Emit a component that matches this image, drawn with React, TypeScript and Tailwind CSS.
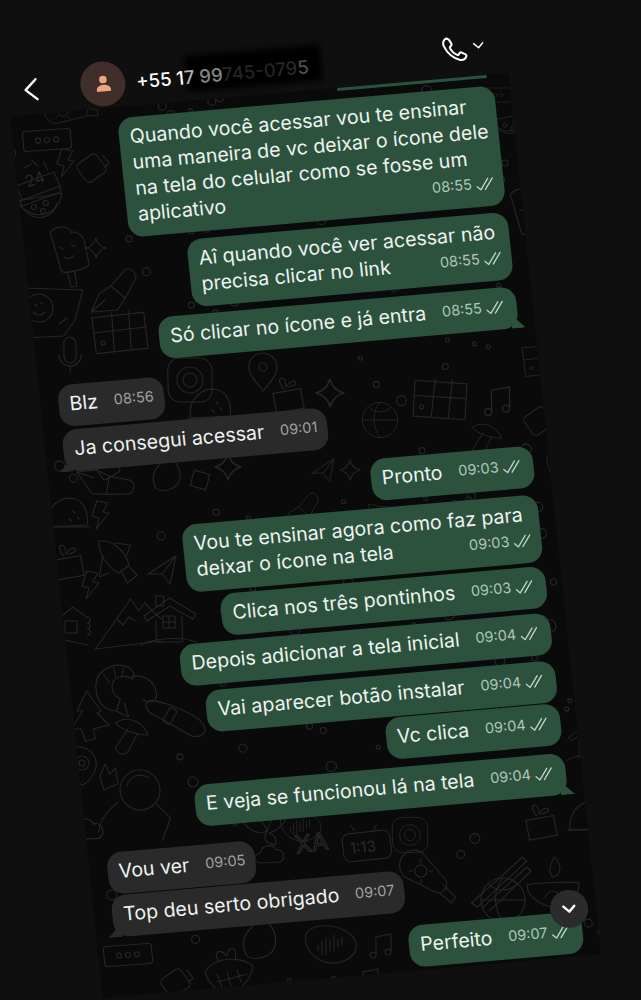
import { ChevronDown } from 'lucide-react'
import type { ReactNode } from 'react'

type Msg = {
  out: boolean
  lines: string[]
  time: string
  mt: string
  tail?: boolean
  down?: boolean
  inset?: string
}

const messages: Msg[] = [
  { out: true, lines: ['Quando você acessar vou te ensinar', 'uma maneira de vc deixar o ícone dele', 'na tela do celular como se fosse um', 'aplicativo'], time: '08:55', mt: 'mt-0' },
  { out: true, lines: ['Aî quando você ver acessar não', 'precisa clicar no link'], time: '08:55', mt: 'mt-[7px]', inset: 'pr-[4px]' },
  { out: true, lines: ['Só clicar no ícone e já entra'], time: '08:55', mt: 'mt-[7px]', tail: true },
  { out: false, lines: ['Blz'], time: '08:56', mt: 'mt-[17px]' },
  { out: false, lines: ['Ja consegui acessar'], time: '09:01', mt: 'mt-[3px]', tail: true },
  { out: true, lines: ['Pronto'], time: '09:03', mt: 'mt-[14px]' },
  { out: true, lines: ['Vou te ensinar agora como faz para', 'deixar o ícone na tela'], time: '09:03', mt: 'mt-[7px]', inset: 'pr-[6px]' },
  { out: true, lines: ['Clica nos três pontinhos'], time: '09:03', mt: 'mt-[4px]' },
  { out: true, lines: ['Depois adicionar a tela inicial'], time: '09:04', mt: 'mt-[5px]' },
  { out: true, lines: ['Vai aparecer botão instalar'], time: '09:04', mt: 'mt-[6px]' },
  { out: true, lines: ['Vc clica'], time: '09:04', mt: 'mt-[1px]' },
  { out: true, lines: ['E veja se funcionou lá na tela'], time: '09:04', mt: 'mt-[8px]', tail: true },
  { out: false, lines: ['Vou ver'], time: '09:05', mt: 'mt-[18px]' },
  { out: false, lines: ['Top deu serto obrigado'], time: '09:07', mt: 'mt-px', tail: true },
  { out: true, lines: ['Perfeito'], time: '09:07', mt: 'mt-[14px]', down: true },
]

// wallpaper doodles, drawn around 0,0
const shapes: Record<string, ReactNode> = {
  card: <><rect x="-24" y="-10" width="48" height="20" rx="3" /><circle cx="-9" r="2.5" /><circle r="2.5" /><circle cx="9" r="2.5" /></>,
  cake: <><path d="M-22 4l38-14 6 14-38 14zM-22 4l0 8 6 12 38-14 0-6" /><path d="M-14-14l8-4M-6-22l6 6M6-20l4 8" /><text x="-12" y="2" fontSize="16" fill="#262626" stroke="none" transform="rotate(-18)">24</text></>,
  melon: <><path d="M-22-12A23 23 0 0 0 22-20Z" /><path d="M-16-4A18 18 0 0 0 17-10" /><circle cx="-6" cy="-6" r="2.5" /><circle cx="3" cy="-2" r="2.5" /><circle cx="6" cy="-10" r="2.5" /></>,
  popsicle: <><path d="M-16-22C-6-30 4-26 5-20c4-2 10 2 12 8l3 24c0 5-24 9-28 6z" /><path d="M-2 20l2 14h6l-1-16" /><path d="M-8-6l4 2M4-8l4 2M-4 4a6 6 0 0 0 9-1" /></>,
  pen: <><path d="M-22 22l8-18 12-8 14 12-8 12z" /><path d="M-2-4L12-20c5-4 14 4 10 10L12 8" /><path d="M-22 22L-8 10" /></>,
  bolt: <path d="M-3-14L8-12 3-3 9-2-4 14-1 3-8 1z" />,
  jar: <><rect x="-14" y="-11" width="24" height="22" rx="4" transform="rotate(-35)" /><path d="M10-12l6 8-4 4" /></>,
  sparkle: <path d="M0-10Q2-2 10 0 2 2 0 10-2 2-10 0-2-2 0-10z" />,
  smile: <><path d="M-28-22l58 2-8 30-12 16-38 2z" /><circle cx="-14" cy="-2" r="14" /><path d="M-18-6l2 2M-12-8l2 2M-20 2q6 6 12 0M6 14l8-6" /></>,
  grid: <><rect x="-26" y="-18" width="52" height="36" transform="rotate(-6)" /><path d="M-8-20l2 38M9-22l2 38M-26 0l52-6" /><circle cx="-17" cy="10" r="2" /></>,
  mic: <><rect x="-6" y="-16" width="12" height="26" rx="6" /><path d="M-11 2a11 11 0 0 0 22 0M0 13v6" /></>,
  taco: <><path d="M-20 10C-22-10-6-22 8-18c10 2 14 16 12 26z" /><path d="M-22 10h44M6-6l2 2M10 0l2 2M2 2l2 2" /></>,
  rocket: <><path d="M-16-22c12-2 26 8 30 24L4 10C-8 4-16-8-16-22z" /><path d="M-12-8l-4 22 10-4M0-20l16 2-4 10M6 8l6 12 10-8-8-8" /></>,
  plane: <path d="M-14 4L14-14 8 14 0 4zM0 4l14-18" />,
  hut: <><path d="M-22 2L0-16l14 10M-22 2l0 12 36 8M-14-2v16" /><rect x="-8" y="-2" width="12" height="12" /><path d="M14-6c4 0 4 6 0 6 4 0 4 6 0 6 4 0 4 6 0 6" /></>,
  mountain: <path d="M-28 26L8-24 16-12 22-20 38-4M-28 26L38 18M-6-4l6 6 6-8 6 4" />,
  house: <><path d="M-26-4L0-22 26-6l-3 5L0-14-23 1zM-14 0v22h26V-4" /><rect x="-7" y="-4" width="12" height="12" /><path d="M-1-4V8M-7 2H5M-30 26c10-8 40-10 56-4" /><rect x="-14" y="-24" width="8" height="10" /></>,
  shrimp: <><path d="M-24 2C-26-16-6-26 8-20c6 3 8 9 4 12-8-6-20-2-20 8 0 6 4 10 8 12l-4 12C-16 24-24 14-24 2z" /><path d="M-16-12l6 8M-6-20l2 10M4-20l-2 10M-4 24l12 6-4-14" /><path d="M12-10c10-4 22 4 24 14s-6 14-14 8" /></>,
  tree: <path d="M0-26L-10-6-4-6-16 12-6 12-2 24 8 22 6 12 22 8 10-4 14-6z" />,
  mushroom: <><path d="M-14-14C-4-22 14-16 18-2 8-2-8-6-14-14z" /><path d="M-2-8L-14 10c-2 6 8 10 12 4L8-4" /></>,
  avocado: <><path d="M-16-16C-6-24 12-20 14-6c2 10-8 22-14 24-6-2-18-22-16-34z" /><circle cy="-4" r="7" /><circle cy="-4" r="3" /></>,
  astronaut: <><circle r="20" /><path d="M-13-4a14 14 0 0 1 22-8" /><path d="M-22 12c-10 8-18 16-20 30M16 14l14 14-8 22M-40-14l6-12 4 10 6-6 2 16-14 6z" /></>,
  board: <><path d="M-30-18c6-6 50 12 56 22s-4 14-12 12L-24-6c-6-2-8-8-6-12z" /><rect x="-12" y="-8" width="8" height="16" rx="2" transform="rotate(30)" /></>,
  clock: <><rect x="-24" y="-15" width="48" height="28" rx="7" /><text x="-17" y="5" fontSize="15" fill="#2b2b2b" stroke="none">1:13</text><path d="M-14-23l4 5M12-21l-3 5" /></>,
  xa: <><text x="-18" y="8" fontSize="24" fill="none" stroke="#2b2b2b">XA</text></>,
  cloud: <path d="M-12 8c-8 0-8-10 0-10 0-8 12-10 15-3 7-2 11 8 4 12z" />,
  leaf: <path d="M-24-6C-12-12-4-8 0 4 4-10 12-18 24-20 20-6 14 2 2 6 8 8 10 12 8 18-4 16-4 10 0 4-8 8-18 4-24-6z" />,
  berry: <><path d="M-22 2C-12-14 14-14 26-4 24 12 8 24-4 24-14 18-20 10-22 2z" /><path d="M-8-8C-14-16-8-24 0-14 2-26 12-24 8-10M-10 12l30-8M-4 20L-10 4M4 18L0 2M14 12L10 0" /></>,
  audio: <><path d="M-24-8C-18-24 22-18 26 0 28 16 6 24-8 18-18 14-26 4-24-8z" /><path d="M-12 2V8M-8-2V12M-4-6V12M0-4V8M4-8V8M8-4V4M12-6V2" /></>,
  note: <path d="M-7 10a3 3 0 1 0 0 .1V-8L8-11V7a3 3 0 1 0 0 .1" />,
  bottle: <><path d="M-26-18c4-8 14-12 22-6l22 26c6 8-4 18-12 12L-22 0c-6-4-6-12-4-18zM16 8l12 12-4 6-12-10" /><circle cx="-6" cy="-6" r="6" /><path d="M-6-18v4M-18-6h4M-6 2v4M2-6h4" /></>,
  sticks: <path d="M-26 26L26-20l4 4-50 46zM-14 30L30-10l4 4-42 40" />,
  diya: <><path d="M-26 2c8-2 44-4 52-2 0 14-14 24-24 24S-26 16-26 2z" /><path d="M0-6c-6-6-2-14 2-20 6 8 8 14 0 20M-8 14c4-8 12-8 14 0" /></>,
  ball: <><circle r="22" /><path d="M-22 0h44M0-22c-10 12-10 32 0 44M-14-16c8 8 20 8 28 0" /></>,
  lens: <><rect x="-22" y="-22" width="44" height="44" rx="12" /><circle r="13" /><circle r="7" /></>,
  pin: <><path d="M0 18C-8 8-14 2-14-6a14 14 0 0 1 28 0C14 2 8 8 0 18z" /><circle cy="-6" r="4" /></>,
  gift: <><rect x="-14" y="-2" width="28" height="20" transform="rotate(-10)" /><path d="M-3-4C-14-16 0-20-1-6 6-18 16-8 1-6" /></>,
  diamond: <rect x="-8" y="-8" width="16" height="16" transform="rotate(16)" />,
  capsule: <rect x="-12" y="-4" width="24" height="8" rx="4" />,
  flame: <path d="M-12 12C-20-8 0-10-2-22 8-16 16-6 12 6 8 16-8 18-12 12z" />,
}

// placement in picture coordinates, so it lines up with the rotated panel
const placed: [string, number, number, number, number][] = [
  ['card', 47, 140, 1, -4], ['cake', 38, 182, 1, 0], ['melon', 40, 213, 1, 0], ['popsicle', 68, 253, 1, -4],
  ['pen', 113, 290, 1, 0], ['bolt', 65, 163, 1, 0], ['jar', 93, 167, 1, 0], ['sparkle', 96, 248, 1, 0],
  ['smile', 53, 310, 1, 0], ['grid', 120, 333, 1, 0], ['mic', 70, 353, 1, 0], ['bottle', 70, 112, 0.8, -40],
  ['lens', 190, 380, 1, 0], ['pin', 263, 373, 1, 0], ['gift', 287, 393, 1, 0], ['sparkle', 330, 393, 1.4, 0],
  ['taco', 210, 408, 1, 0], ['diamond', 200, 480, 1, 0], ['sparkle', 228, 467, 1.3, 0], ['flame', 167, 475, 1, 0],
  ['pen', 107, 480, 1, 60], ['plane', 323, 470, 0.8, 0], ['grid', 440, 400, 1, 10], ['note', 500, 400, 1.2, 0],
  ['ball', 380, 420, 0.8, 0], ['jar', 540, 420, 1, 0], ['melon', 120, 400, 0.8, 30], ['card', 100, 455, 1, 60],
  ['taco', 67, 517, 1, 0], ['gift', 67, 560, 1, 0], ['rocket', 115, 563, 1, 0], ['plane', 162, 570, 1, 0],
  ['hut', 73, 623, 1, 0], ['mountain', 123, 623, 1, 0], ['house', 170, 620, 1, 0], ['shrimp', 120, 687, 1, 0],
  ['tree', 87, 717, 1, 0], ['mushroom', 130, 737, 1, 0], ['avocado', 82, 767, 1, 0], ['astronaut', 140, 790, 1, 0],
  ['board', 177, 720, 1, 0], ['bolt', 90, 585, 1, 0], ['bolt', 100, 515, 1, 0], ['cloud', 90, 830, 1.2, 0],
  ['clock', 367, 847, 1, -6], ['xa', 313, 843, 1, -8], ['cloud', 273, 855, 1, 0], ['leaf', 267, 827, 1, 0],
  ['card', 128, 955, 1, -4], ['berry', 227, 970, 1, 0], ['audio', 330, 943, 1, 0], ['jar', 177, 982, 1, 0],
  ['note', 383, 945, 1, 0], ['bottle', 427, 877, 1, 0], ['sticks', 497, 877, 1, 0], ['diya', 553, 883, 1, 0],
  ['ball', 503, 900, 1, 0], ['audio', 300, 825, 0.8, 0], ['flame', 260, 940, 1.2, 0], ['note', 370, 980, 1, 0],
  ['popsicle', 528, 215, 1, -4], ['melon', 510, 130, 0.8, 0], ['card', 495, 95, 0.7, 0], ['grid', 545, 360, 0.8, 0],
  ['avocado', 560, 470, 0.8, 0], ['board', 595, 520, 0.8, 0], ['cloud', 545, 625, 1, 0], ['house', 590, 740, 0.8, 0],
  ['taco', 590, 820, 1, 0], ['pin', 590, 640, 1, 0], ['gift', 540, 820, 1, 0], ['lens', 410, 835, 0.8, 0],
  ['mushroom', 485, 440, 0.9, 0], ['sparkle', 350, 470, 1, 0], ['rocket', 380, 520, 0.7, 0], ['pen', 300, 510, 0.8, 0],
]

const C = Math.cos((5 * Math.PI) / 180)
const S = Math.sin((5 * Math.PI) / 180)
const T = Math.tan(Math.PI / 180)

function toPanel(sx: number, sy: number) {
  const dx = sx - 320.5
  const dy = sy - 500
  const ly = dx * S + dy * C
  const lx = dx * C - dy * S - T * ly
  return [lx + 268.5, ly + 409]
}

const rand = (n: number) => {
  const v = Math.sin(n * 12.9898) * 43758.5453
  return v - Math.floor(v)
}

const dots = Array.from({ length: 420 }).map((_, i) => {
  const sx = 10 + rand(i + 1) * 600
  const sy = 90 + rand(i + 500) * 910
  return { sx, sy, r: 2 + (i % 4), key: i }
}).filter((d) => placed.every(([, x, y, s]) => Math.hypot(d.sx - x, d.sy - y) > 32 * s))

function Wallpaper() {
  return (
    <svg width="500" height="886" viewBox="0 0 500 886" fill="none" stroke="#262626" strokeWidth="1.1" strokeLinejoin="round" strokeLinecap="round" className="absolute inset-0">
      {dots.map((d) => {
        const [x, y] = toPanel(d.sx, d.sy)
        return <circle key={d.key} cx={x} cy={y} r={d.r} />
      })}
      {placed.map(([kind, sx, sy, s, rot], i) => {
        const [x, y] = toPanel(sx, sy)
        return <g key={i} transform={`translate(${x} ${y}) rotate(${rot + 5}) scale(${s})`}>{shapes[kind]}</g>
      })}
    </svg>
  )
}

function Ticks() {
  return (
    <svg width="18" height="13" viewBox="0 0 18 13" fill="none" stroke="#c2d3c9" strokeWidth="1.3" strokeLinecap="round" strokeLinejoin="round" className="ml-[4px] shrink-0">
      <path d="M1 8.5L4.500 12 12.500 1" />
      <path d="M9 12L17 1" />
    </svg>
  )
}

function Stamp({ msg }: { msg: Msg }) {
  const single = msg.out && msg.lines.length === 1
  return (
    <span className={`flex items-center text-[14.5px] leading-[26px] shrink-0 ${msg.out ? 'text-[#afc5b7]' : 'text-[#a0a0a0]'} ${single ? 'pr-[3px]' : ''}`}>
      {msg.time}
      {msg.out && <Ticks />}
    </span>
  )
}

function Bubble({ msg }: { msg: Msg }) {
  const bg = msg.out ? 'bg-[#2c523e]' : 'bg-[#2a2a2a]'
  const last = msg.lines[msg.lines.length - 1]
  return (
    <div className={`flex ${msg.out ? 'justify-end' : 'justify-start'} ${msg.mt}`}>
      <div className={`relative ${bg} rounded-[15px] pl-[11px] pr-[10px] pt-[6px] pb-[10px] text-[#eef3f0] text-[19.6px] leading-[26px]`}>
        {msg.lines.slice(0, -1).map((line) => (
          <div key={line} className={`whitespace-nowrap ${msg.inset ?? ''}`}>{line}</div>
        ))}
        <div className="flex justify-between items-end gap-[16px] whitespace-nowrap">
          <span>{last}</span>
          <Stamp msg={msg} />
        </div>
        {msg.tail && (
          <span
            className={`absolute w-[14px] h-[14px] ${bg} ${msg.out
              ? 'right-[-7px] bottom-0 [clip-path:polygon(0_0,40%_40%,100%_100%,0_100%)]'
              : 'left-[-6px] bottom-0 [clip-path:polygon(100%_0,100%_100%,0_100%,60%_40%)]'}`}
          />
        )}
        {msg.down && (
          <div className="absolute right-[-8px] top-[-22px] w-[38px] h-[38px] rounded-full bg-[#2b2b2b] flex items-center justify-center">
            <ChevronDown size={22} strokeWidth={2.6} className="text-white" />
          </div>
        )}
      </div>
    </div>
  )
}

export default function App() {
  return (
    <div className="relative w-[641px] h-[1000px] overflow-hidden bg-[#0f0f0f] font-['Inter',sans-serif]">
      <div className="w-[641px] h-[1000px] rotate-[-5deg] skew-x-[1deg] pt-[41px]">
        <header className="h-[50px] flex items-center pl-[67px] pr-[107px] text-white">
          <svg width="16" height="24" viewBox="0 0 16 24" fill="none" stroke="white" strokeWidth="2.4" strokeLinecap="round" strokeLinejoin="round">
            <path d="M14 2L3 12l11 10" />
          </svg>
          <div className="ml-[42px] w-[45px] h-[45px] rounded-full bg-[#3f2e29] flex items-center justify-center">
            <svg width="16" height="17" viewBox="0 0 16 17" fill="#f0a383">
              <circle cx="8" cy="4.2" r="3.8" />
              <path d="M1 16c-1-4 2.500-6.500 7-6.500s8 2.500 7 6.500z" />
            </svg>
          </div>
          <div className="relative top-[2px] ml-[11px] text-[18.5px] font-medium whitespace-nowrap">
            <span className="absolute left-[50px] top-[-8px] w-[136px] h-[36px] bg-black blur-[3px]" />
            <span className="relative text-white">+55 1</span>
            <span className="relative text-[#b0b0b0]">7 </span>
            <span className="relative text-[#858585]">99</span>
            <span className="relative text-[#242424]">745-0</span>
            <span className="relative text-[#282828]">79</span>
            <span className="relative text-[#4f4f4f]">5</span>
          </div>
          <div className="ml-auto flex items-center -mt-[7px]">
            <svg width="27" height="27" viewBox="0 0 24 24" fill="none" stroke="white" strokeWidth="1.8" strokeLinejoin="round">
              <path d="M4 2.500c-2 1.500-2.500 4-1.500 6.500 2 6 7.500 11.500 13 13 2.500.6 4.700-.5 5.800-2.700.3-.7.100-1.300-.5-1.700l-3.300-2c-.6-.3-1.200-.3-1.700.2l-1.100 1.300c-.4.4-.9.500-1.400.2-2.500-1.300-4.600-3.800-5.700-6.300-.2-.5-.1-1 .3-1.400l1-1c.5-.5.6-1.100.3-1.700l-1.700-3.500C6 1.800 5 1.800 4 2.500z" />
            </svg>
            <ChevronDown size={18} strokeWidth={2} className="ml-px -mt-[4px]" />
          </div>
        </header>
        <main className="relative ml-[52px] w-[500px] h-[886px] bg-[#0a0a0a]">
          <Wallpaper />
          <div className="relative">
            <div className="flex justify-end pr-[22px]">
              <div className="w-[150px] h-[3px] bg-[#2c523e]" />
            </div>
            <div className="pt-[8px] pl-[18px] pr-[16px]">
              {messages.map((msg) => (
                <Bubble key={msg.lines[0]} msg={msg} />
              ))}
            </div>
          </div>
        </main>
      </div>
    </div>
  )
}
